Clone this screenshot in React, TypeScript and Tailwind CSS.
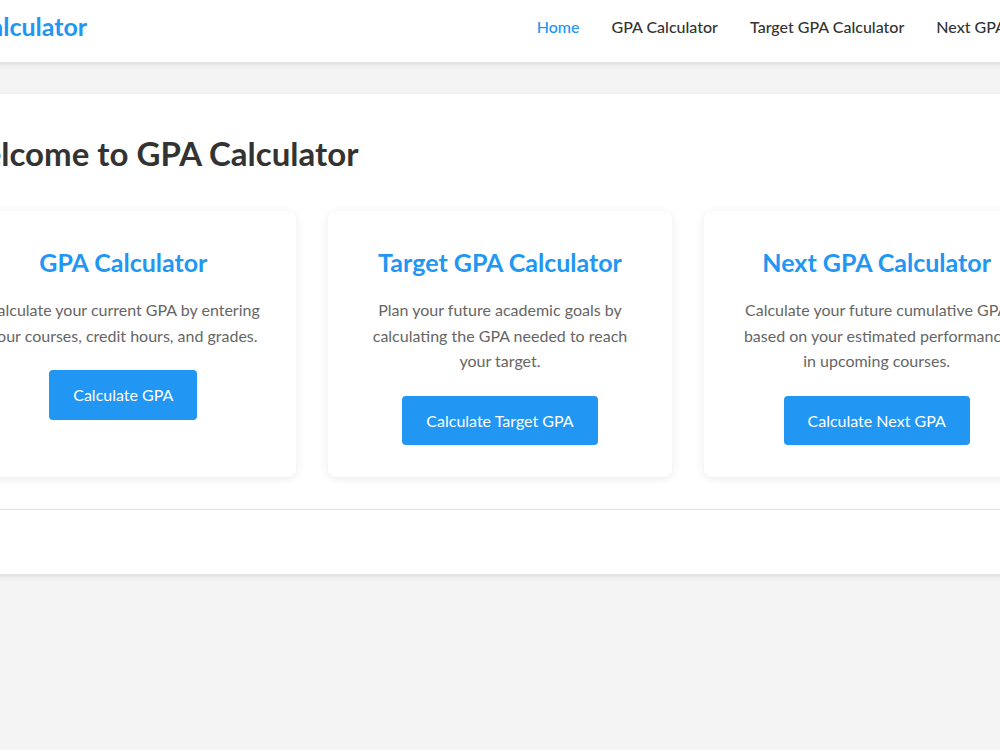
import React from 'react'

const font = { fontFamily: 'Lato, "Open Sans", Arial, sans-serif' }

const navLinks = [
  { label: 'Home', active: true },
  { label: 'GPA Calculator', active: false },
  { label: 'Target GPA Calculator', active: false },
  { label: 'Next GPA Calculator', active: false },
]

const tools = [
  {
    title: 'GPA Calculator',
    text: 'Calculate your current GPA by entering your courses, credit hours, and grades.',
    action: 'Calculate GPA',
  },
  {
    title: 'Target GPA Calculator',
    text: 'Plan your future academic goals by calculating the GPA needed to reach your target.',
    action: 'Calculate Target GPA',
  },
  {
    title: 'Next GPA Calculator',
    text: 'Calculate your future cumulative GPA based on your estimated performance in upcoming courses.',
    action: 'Calculate Next GPA',
  },
]

function ToolCard({ title, text, action }: { title: string; text: string; action: string }) {
  return (
    <div className="bg-white rounded-lg p-8 text-center shadow-[0_2px_10px_rgba(0,0,0,0.08)]">
      <h2 className="text-[25px] leading-[38px] font-bold text-[#2196f3] mb-4">{title}</h2>
      <p className="text-[16px] leading-[1.6] text-[#666] mb-[22px]">{text}</p>
      <button className="bg-[#2196f3] text-white text-[16px] leading-[1.6] px-6 py-3 rounded">{action}</button>
    </div>
  )
}

export default function App() {
  return (
    <div className="w-full min-h-screen bg-[#f4f4f4] overflow-hidden" style={font}>
      <div className="w-[1226px] -ml-[113px]">
        <header className="h-[62px] bg-white flex items-center justify-between px-8 pb-2 shadow-[0_2px_5px_rgba(0,0,0,0.1)]">
          <div className="text-[25px] font-bold text-[#2196f3]">GPA Calculator</div>
          <nav className="flex gap-8">
            {navLinks.map((l) => (
              <a
                key={l.label}
                className={'text-[16px] font-medium ' + (l.active ? 'text-[#2196f3]' : 'text-[#333]')}
              >
                {l.label}
              </a>
            ))}
          </nav>
        </header>

        <main className="mx-8 mt-8 bg-white p-8 shadow-[0_2px_5px_rgba(0,0,0,0.1)]">
          <h1 className="text-[33px] leading-[44px] font-bold text-[#333] mt-[5px] mb-9">Welcome to GPA Calculator</h1>
          <div className="grid grid-cols-3 gap-8">
            {tools.map((t) => (
              <ToolCard key={t.title} {...t} />
            ))}
          </div>
        </main>

        <footer className="mx-8 mt-px h-16 bg-white shadow-[0_2px_5px_rgba(0,0,0,0.1)]" />
      </div>
    </div>
  )
}
